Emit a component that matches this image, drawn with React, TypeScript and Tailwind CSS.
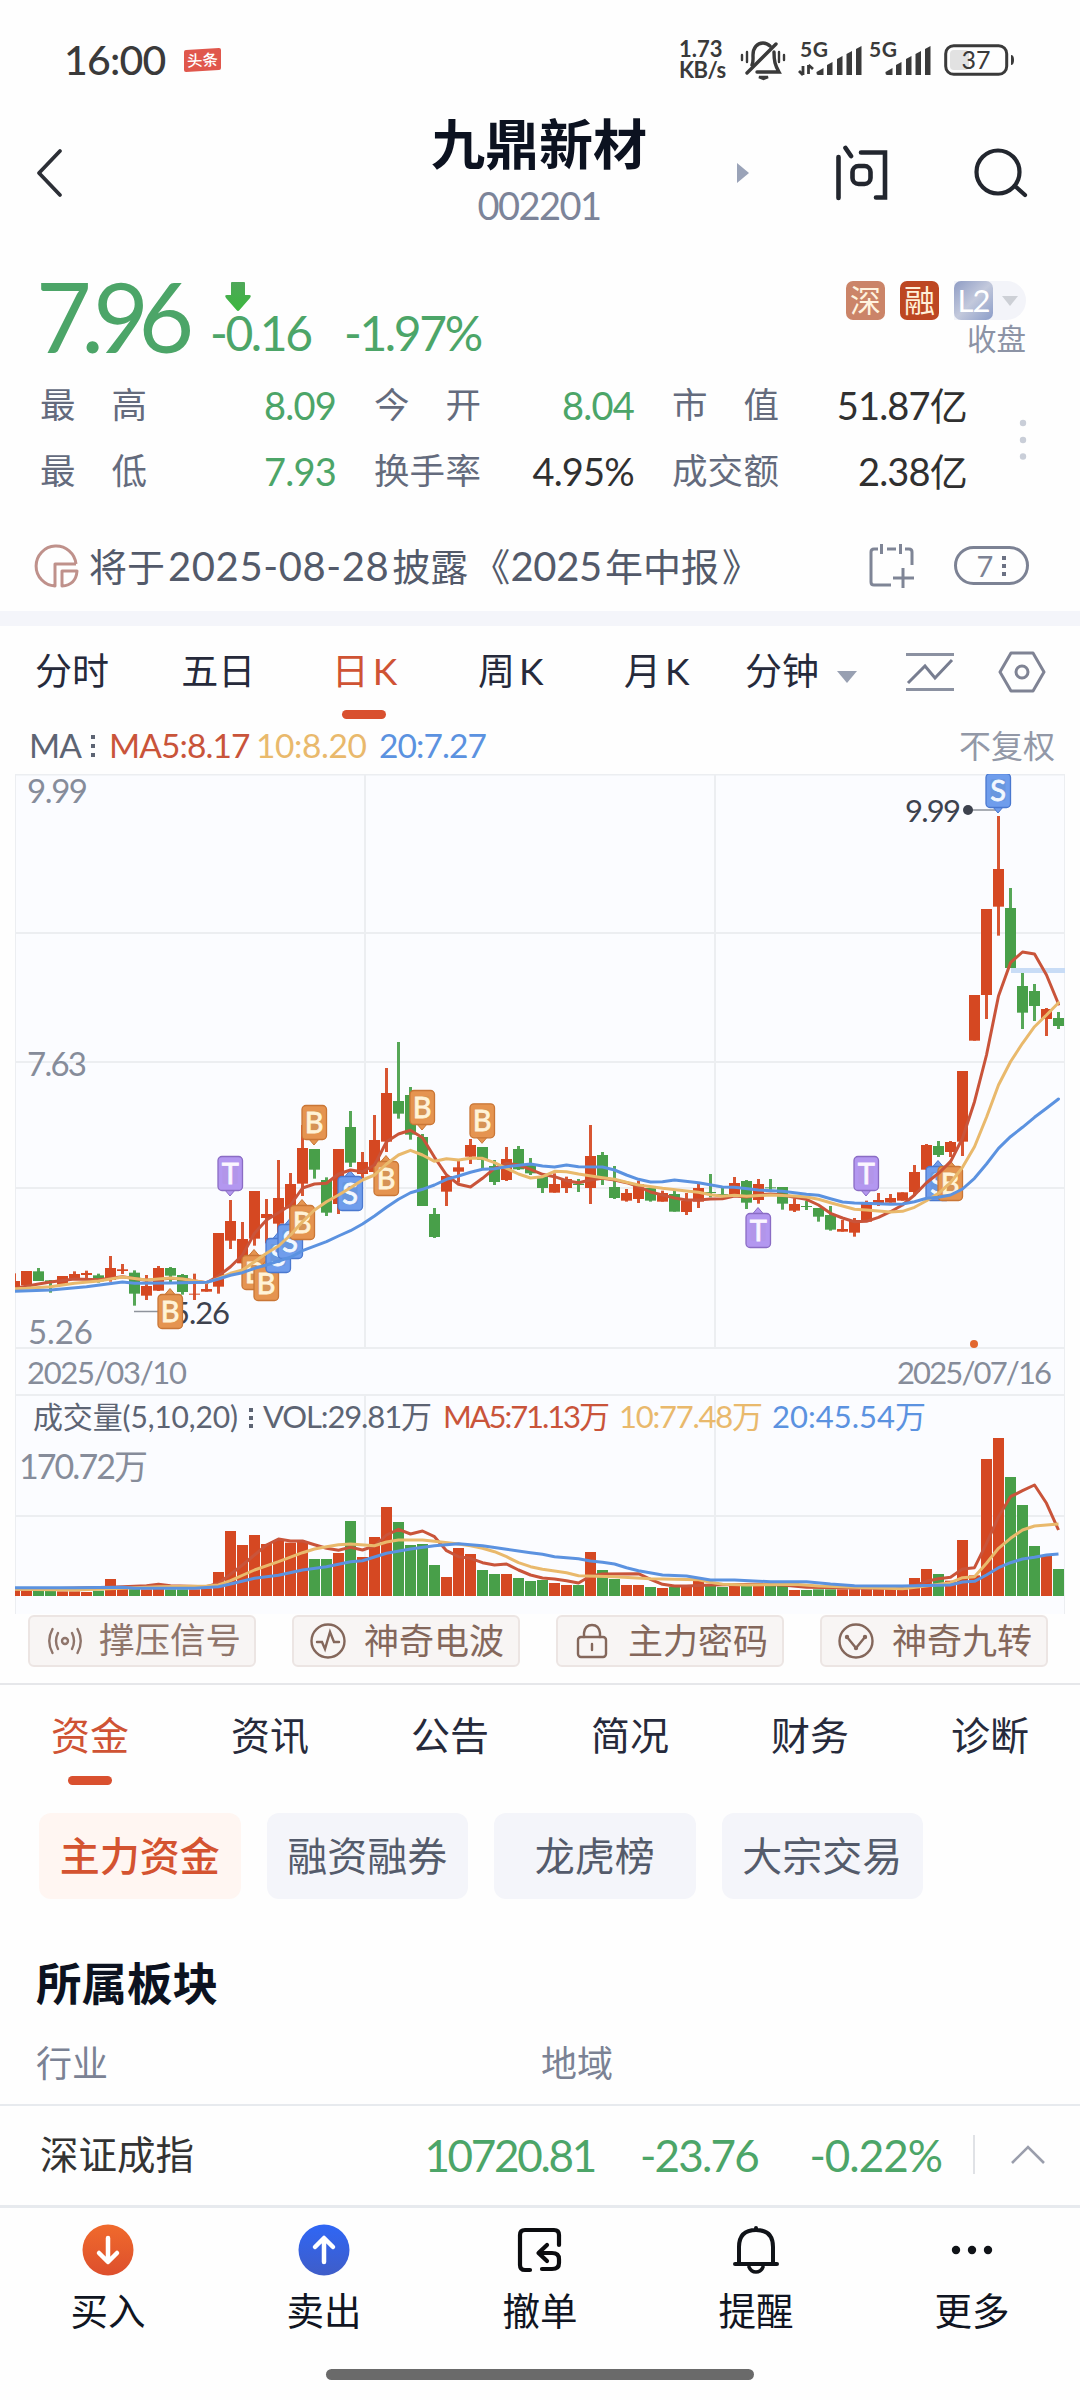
import React from 'react';
import clsx from 'clsx';

type Candle = [string, number, number, number, number, number];
type Point = [number, number];

const RED = '#d54822';
const GREEN = '#489f49';

// [color, body top, body bottom, wick top, wick bottom, volume top], in thirds of a pixel
const candles: Candle[] = [
  ['r', 963, 981, 940, 981, 752], ['r', 933, 976, 933, 976, 752], ['g', 934, 963, 924, 963, 752], ['g', 961, 966, 960, 998, 752],
  ['r', 948, 974, 948, 974, 754], ['r', 942, 956, 934, 958, 754], ['r', 939, 945, 932, 955, 756], ['g', 946, 964, 941, 968, 752],
  ['r', 924, 960, 888, 965, 717], ['r', 928, 933, 912, 942, 745], ['g', 938, 1001, 931, 1037, 735], ['r', 978, 1007, 945, 1020, 748],
  ['r', 924, 992, 918, 993, 742], ['g', 924, 947, 921, 970, 748], ['g', 945, 996, 942, 1004, 748], ['r', 1001, 1004, 941, 1020, 748],
  ['r', 987, 995, 970, 995, 745], ['r', 819, 980, 819, 1001, 696], ['r', 783, 842, 720, 867, 573], ['r', 837, 910, 786, 910, 615],
  ['r', 693, 836, 693, 857, 585], ['r', 762, 774, 717, 850, 612], ['r', 714, 791, 600, 830, 600], ['r', 672, 745, 639, 800, 608],
  ['r', 564, 671, 495, 708, 603], ['g', 567, 629, 567, 656, 657], ['g', 660, 758, 652, 768, 657], ['r', 567, 732, 567, 762, 639],
  ['g', 501, 608, 453, 621, 543], ['r', 606, 642, 576, 655, 651], ['r', 540, 636, 465, 636, 591], ['r', 399, 545, 324, 576, 501],
  ['g', 423, 461, 246, 476, 546], ['g', 405, 524, 381, 539, 615], ['g', 531, 738, 522, 738, 612], ['g', 762, 831, 744, 834, 675],
  ['r', 648, 695, 648, 738, 711], ['r', 622, 635, 603, 668, 624], ['r', 555, 590, 537, 612, 642], ['g', 561, 600, 561, 625, 690],
  ['g', 618, 666, 600, 675, 702], ['r', 597, 660, 561, 663, 702], ['g', 567, 628, 558, 630, 714], ['g', 612, 640, 594, 645, 723],
  ['g', 650, 684, 650, 699, 720], ['r', 672, 698, 640, 698, 729], ['r', 657, 684, 650, 699, 735], ['g', 671, 675, 657, 696, 735],
  ['r', 588, 684, 495, 732, 636], ['g', 585, 657, 576, 675, 690], ['g', 681, 714, 618, 717, 717], ['r', 699, 722, 687, 725, 735],
  ['r', 672, 717, 662, 729, 735], ['g', 684, 722, 684, 725, 741], ['r', 699, 725, 692, 725, 744], ['g', 702, 755, 690, 755, 741],
  ['r', 722, 756, 699, 765, 738], ['r', 684, 725, 672, 744, 722], ['g', 696, 699, 642, 712, 735], ['g', 702, 705, 682, 712, 741],
  ['r', 669, 708, 651, 708, 738], ['g', 663, 728, 660, 747, 738], ['r', 672, 720, 657, 731, 735], ['g', 682, 685, 657, 690, 738],
  ['g', 681, 731, 681, 749, 736], ['r', 732, 752, 715, 756, 750], ['g', 738, 741, 722, 750, 750], ['g', 744, 770, 744, 785, 748],
  ['g', 765, 809, 738, 812, 748], ['r', 807, 815, 780, 815, 748], ['r', 780, 818, 774, 830, 748], ['r', 732, 785, 722, 785, 748],
  ['r', 720, 730, 699, 738, 748], ['r', 714, 728, 702, 728, 748], ['r', 697, 722, 697, 722, 748], ['r', 636, 696, 615, 708, 714],
  ['r', 555, 629, 552, 629, 687], ['g', 558, 585, 543, 591, 702], ['r', 546, 576, 543, 591, 722], ['r', 333, 545, 333, 588, 600],
  ['r', 105, 242, 105, 242, 706], ['r', -153, 105, -153, 177, 357], ['r', -273, -160, -432, -73, 294], ['g', -156, 24, -216, 24, 411],
  ['g', 78, 158, 39, 207, 495], ['g', 93, 138, 72, 183, 618], ['r', 147, 177, 144, 228, 648], ['g', 174, 198, 156, 207, 687],
];

const ma5: Point[] = [[0, 985], [2, 972], [3, 966], [5, 957], [7, 959], [9, 950], [11, 961], [13, 955], [14, 957], [16, 968], [17, 948], [18, 920], [19, 885], [20, 820], [21, 780], [22, 758], [23, 735], [24, 684], [25, 672], [26, 670], [27, 642], [28, 630], [29, 635], [30, 615], [31, 545], [32, 522], [33, 511], [34, 533], [35, 592], [36, 645], [37, 673], [38, 681], [39, 655], [40, 625], [41, 610], [42, 615], [43, 628], [44, 643], [45, 650], [46, 662], [47, 668], [48, 660], [49, 655], [50, 660], [51, 668], [52, 680], [53, 696], [54, 705], [55, 714], [56, 720], [57, 720], [58, 717], [59, 716], [60, 708], [61, 711], [62, 704], [63, 702], [64, 705], [65, 712], [66, 718], [67, 735], [68, 760], [69, 774], [70, 785], [71, 784], [72, 772], [73, 755], [74, 735], [75, 705], [76, 668], [77, 640], [78, 605], [79, 535], [80, 425], [81, 285], [82, 108], [83, 8], [84, -24], [85, -18], [86, 45], [87, 132]];
const ma10: Point[] = [[0, 986], [1, 985], [3, 980], [5, 970], [7, 963], [9, 951], [11, 960], [13, 954], [14, 957], [16, 968], [17, 955], [18, 940], [19, 930], [20, 905], [21, 880], [22, 858], [23, 825], [24, 785], [25, 750], [26, 725], [27, 705], [28, 683], [29, 660], [30, 645], [31, 612], [32, 585], [33, 571], [34, 585], [35, 604], [36, 596], [37, 600], [38, 595], [39, 595], [40, 608], [41, 625], [42, 642], [43, 654], [44, 650], [45, 634], [46, 635], [47, 642], [49, 653], [50, 658], [51, 667], [52, 675], [54, 685], [56, 693], [57, 697], [58, 704], [59, 709], [60, 706], [61, 709], [63, 705], [65, 708], [66, 711], [67, 718], [68, 728], [69, 738], [70, 748], [71, 750], [73, 756], [74, 754], [75, 742], [76, 722], [77, 700], [78, 668], [79, 622], [80, 560], [81, 472], [82, 375], [83, 305], [84, 250], [85, 200], [86, 165], [87, 128]];
const ma20: Point[] = [[0, 994], [3, 990], [6, 980], [9, 966], [10, 970], [13, 969], [16, 967], [17, 957], [18, 946], [19, 938], [20, 925], [21, 915], [22, 903], [23, 892], [24, 872], [26, 845], [27, 828], [28, 812], [29, 792], [30, 768], [31, 742], [32, 718], [33, 698], [34, 688], [35, 675], [36, 658], [37, 648], [38, 637], [39, 628], [40, 626], [41, 620], [43, 612], [44, 618], [45, 621], [46, 615], [47, 620], [49, 621], [50, 630], [51, 645], [52, 658], [53, 666], [54, 665], [55, 660], [57, 668], [59, 681], [60, 682], [62, 690], [64, 694], [65, 698], [66, 703], [67, 706], [68, 716], [69, 726], [70, 729], [72, 731], [73, 733], [74, 732], [75, 725], [76, 715], [77, 712], [78, 705], [79, 687], [80, 655], [81, 612], [82, 565], [83, 530], [84, 502], [85, 472], [86, 445], [87, 417]];

const vol5: Point[] = [[0, 748], [2, 747], [8, 742], [11, 737], [12, 733], [13, 737], [16, 740], [17, 730], [18, 703], [19, 675], [20, 645], [21, 615], [22, 597], [23, 603], [24, 603], [25, 614], [26, 625], [27, 631], [28, 622], [29, 630], [30, 618], [31, 585], [32, 568], [33, 582], [34, 573], [35, 590], [36, 632], [37, 650], [38, 655], [39, 668], [40, 675], [41, 672], [42, 690], [43, 705], [44, 714], [45, 717], [46, 722], [47, 729], [48, 708], [49, 702], [52, 701], [53, 718], [54, 733], [55, 738], [56, 738], [58, 735], [62, 733], [64, 735], [66, 742], [70, 744], [74, 745], [75, 738], [76, 724], [77, 716], [78, 712], [79, 687], [80, 683], [81, 610], [82, 530], [83, 470], [84, 452], [85, 435], [86, 490], [87, 570]];
const vol10: Point[] = [[0, 748], [5, 750], [9, 745], [12, 740], [16, 738], [17, 735], [18, 722], [20, 690], [22, 665], [24, 638], [25, 627], [26, 620], [27, 614], [28, 612], [30, 617], [31, 606], [32, 600], [34, 600], [35, 604], [37, 612], [38, 617], [39, 625], [40, 635], [41, 650], [42, 668], [43, 680], [44, 688], [46, 698], [47, 707], [50, 710], [53, 716], [57, 719], [58, 727], [59, 733], [61, 735], [65, 733], [67, 738], [70, 742], [74, 746], [76, 738], [78, 728], [79, 713], [80, 710], [81, 670], [82, 625], [83, 595], [84, 570], [85, 558], [87, 552]];
const vol20: Point[] = [[0, 743], [5, 743], [9, 742], [10, 745], [15, 745], [17, 740], [18, 732], [20, 715], [22, 706], [24, 690], [26, 680], [28, 665], [29, 662], [31, 640], [33, 627], [35, 617], [37, 611], [39, 617], [41, 628], [43, 638], [44, 643], [45, 650], [47, 656], [48, 663], [49, 667], [50, 672], [51, 683], [52, 692], [54, 705], [56, 708], [58, 720], [60, 720], [63, 725], [66, 725], [68, 732], [70, 737], [74, 738], [78, 735], [79, 726], [80, 724], [81, 705], [82, 683], [83, 668], [84, 657], [85, 652], [86, 645], [87, 642]];

const marks: { i: number; y: number; kind: 'B' | 'S' | 'T'; up?: boolean }[] = [
  { i: 13, y: 1002, kind: 'B', up: true },
  { i: 18, y: 588, kind: 'T' },
  { i: 20, y: 885, kind: 'B', up: true },
  { i: 21, y: 918, kind: 'B', up: true },
  { i: 22, y: 834, kind: 'S', up: true },
  { i: 23, y: 792, kind: 'S', up: true },
  { i: 24, y: 735, kind: 'B', up: true },
  { i: 25, y: 435, kind: 'B' },
  { i: 28, y: 648, kind: 'S', up: true },
  { i: 31, y: 603, kind: 'B', up: true },
  { i: 34, y: 390, kind: 'B' },
  { i: 39, y: 430, kind: 'B' },
  { i: 62, y: 759, kind: 'T', up: true },
  { i: 71, y: 588, kind: 'T' },
  { i: 77, y: 618, kind: 'S', up: true },
  { i: 78, y: 618, kind: 'B', up: true },
  { i: 82, y: -561, kind: 'S' },
];

const markColors = {
  B: { fill: '#e59450', edge: '#c97636', inner: '#cb935a', text: '#fff3d8' },
  S: { fill: '#6f9dec', edge: '#4a78cf', inner: '#6593d6', text: '#f2f8ff' },
  T: { fill: '#b397f0', edge: '#8a6cc4', inner: '#b095e4', text: '#fbf6ff' },
};

// chart origin is (15, 774) on the page
const cx = (i: number) => 12 * i - 0.5;
const py = (v: number) => v / 3 + 186;
const vy = (v: number) => v / 3 - 55;

const toPath = (pts: Point[], y: (v: number) => number) =>
  pts.map(([i, v], n) => `${n ? 'L' : 'M'}${cx(i).toFixed(1)} ${y(v).toFixed(1)}`).join(' ');

function Mark({ i, y, kind, up }: { i: number; y: number; kind: 'B' | 'S' | 'T'; up?: boolean }) {
  const c = markColors[kind];
  return (
    <g transform={`translate(${cx(i) - 13} ${py(y)})`}>
      <path d={up ? 'M7 1 L12.5 -5.5 L18 1 Z' : 'M7 33.5 L12.5 40 L18 33.5 Z'} fill={c.fill} stroke={c.edge} strokeWidth="1" />
      <rect x="0.5" y="0.5" width="24.5" height="34" rx="4" fill={c.fill} stroke={c.edge} strokeWidth="1.3" />
      <rect x="5" y="6" width="15" height="22" rx="2" fill={c.inner} opacity="0.6" />
      <text x="12.7" y="28" textAnchor="middle" fontFamily="Lato, sans-serif" fontSize="29" fill={c.text}
        stroke={c.text} strokeWidth="0.8">{kind}</text>
    </g>
  );
}

function Label({ x, y, w, size, fill, children }: { x: number; y: number; w: number; size: number; fill: string; children: string }) {
  return (
    <text x={x} y={y} textLength={w} fontSize={size} fill={fill}
      fontFamily="Lato, 'Noto Sans CJK SC', sans-serif">{children}</text>
  );
}

function KLineChart() {
  return (
    <svg width="1050" height="840" viewBox="0 0 1050 840" className="block">
      <rect width="1050" height="840" fill="#fbfcff" />
      <g stroke="#eceef1" strokeWidth="2">
        {[0.5, 159, 288, 414, 574, 621, 742].map((y) => <path key={y} d={`M0 ${y}H1050`} />)}
        {[350, 700].map((x) => <path key={x} d={`M${x} 0V574M${x} 621V822`} />)}
        <path d="M0.5 0V840M1049.5 0V840" strokeWidth="1" />
      </g>

      <path d="M996 196.5H1050" stroke="#c8dcf6" strokeWidth="5" />

      {candles.map(([c, top, bottom, high, low], i) => {
        const color = c === 'r' ? RED : GREEN;
        return (
          <g key={i} fill={color}>
            <rect x={cx(i) - 1.5} y={py(high)} width="3" height={(low - high) / 3} opacity="0.92" />
            <rect x={cx(i) - 5.5} y={py(top)} width="11" height={(bottom - top) / 3} />
          </g>
        );
      })}

      <path d="M119 537.5H146M956 36H983" stroke="#8e939c" strokeWidth="1.6" />
      <circle cx="953" cy="36" r="5" fill="#3d424e" />
      <Label x={890} y={48} w={56} size={31} fill="#3d424e">9.99</Label>
      <Label x={157} y={550} w={58} size={31} fill="#3d424e">5.26</Label>

      {marks.map((m) => <Mark key={m.i} {...m} />)}

      <g fill="none" strokeWidth="3" strokeLinejoin="round" strokeLinecap="round">
        <path d={toPath(ma5, py)} stroke="#c9543a" />
        <path d={toPath(ma10, py)} stroke="#e9b96c" />
        <path d={toPath(ma20, py)} stroke="#5b92e0" />
      </g>
      <circle cx="959" cy="570" r="4" fill="#e2672f" />

      <Label x={12} y={29} w={61} size={33} fill="#868c9a">9.99</Label>
      <Label x={12} y={302} w={60} size={33} fill="#868c9a">7.63</Label>
      <Label x={13} y={570} w={65} size={33} fill="#868c9a">5.26</Label>
      <Label x={12} y={610} w={160} size={31} fill="#868c9a">2025/03/10</Label>
      <Label x={882} y={610} w={155} size={31} fill="#868c9a">2025/07/16</Label>

      {candles.map(([c, , , , , v], i) => (
        <rect key={i} x={cx(i) - 5.5} y={vy(v) + 621} width="11" height={(768 - v) / 3} fill={c === 'r' ? RED : GREEN} />
      ))}
      <g fill="none" strokeWidth="3" strokeLinejoin="round" transform="translate(0 621)">
        <path d={toPath(vol5, vy)} stroke="#c9543a" />
        <path d={toPath(vol10, vy)} stroke="#e9b96c" />
        <path d={toPath(vol20, vy)} stroke="#5b92e0" />
      </g>

      <Label x={18} y={654} w={205} size={30} fill="#5d6473">成交量(5,10,20)</Label>
      <g fill="#5d6473">
        <rect x="234" y="634" width="4" height="4" /><rect x="234" y="642" width="4" height="4" /><rect x="234" y="650" width="4" height="4" />
      </g>
      <Label x={248} y={654} w={169} size={31} fill="#5d6473">VOL:29.81万</Label>
      <Label x={428} y={654} w={167} size={31} fill="#c9543a">MA5:71.13万</Label>
      <Label x={604} y={654} w={144} size={31} fill="#e9b96c">10:77.48万</Label>
      <Label x={757} y={654} w={154} size={31} fill="#5b92e0">20:45.54万</Label>
      <Label x={4} y={705} w={129} size={34} fill="#868c9a">170.72万</Label>
    </svg>
  );
}

function SignalBars({ data }: { data?: boolean }) {
  return (
    <svg width="64" height="44" viewBox="0 0 64 44" fill="#3a3a3a" className="overflow-visible">
      <text x="0" y="19" fontFamily="Lato, sans-serif" fontWeight="700" fontSize="21" textLength="28">5G</text>
      {data && <path d="M3 37V28M-1 33L3 37M8.500 27V36M8.500 27L13 31" stroke="#3a3a3a" strokeWidth="2.800" fill="none" />}
      <path d="M16.500 34L23.500 30V37H18Q16.500 37 16.500 35Z" />
      <path d="M27 27L32.500 24V37H27Z" />
      <path d="M37 21L42.500 18V37H37Z" />
      <path d="M46.500 16L52 13V37H46.500Z" />
      <path d="M56 11L61.500 8V37H56Z" />
    </svg>
  );
}

function StatusBar() {
  return (
    <div className="h-[120px] flex items-center pl-[64px] pr-[64px] text-[#3a3a3a]">
      <span className="text-[41px] font-medium leading-none tracking-[-0.8px] -mt-[2px]">16:00</span>
      <svg width="37" height="26" viewBox="0 0 37 26" className="ml-[19px]">
        <path d="M2 3L35 1Q37 1 37 3V21Q37 23 35 23L2 25Q0 25 0 23V5Q0 3 2 3Z" fill="#e0574c" />
        <text x="3" y="19" fontFamily="'Noto Sans CJK SC', sans-serif" fontWeight="500" fontSize="15.5" fill="#fff" transform="rotate(-3 18 13)">头条</text>
      </svg>
      <div className="ml-auto flex items-center">
        <div className="flex flex-col text-[22px] font-bold leading-[21px] w-[52px] whitespace-nowrap -mt-[3px] -ml-[5px] mr-[2px]">
          <span>1.73</span>
          <span className="tracking-[-0.5px]">KB/s</span>
        </div>
        <svg width="46" height="42" viewBox="0 0 46 42" fill="none" stroke="#3a3a3a" strokeWidth="3.4" strokeLinecap="round" className="ml-[7px]">
          <path d="M12 26C13.500 23 13 20 13 16C13 9 17 4 23 4C26 4 28 5 30 7M34 13C34 22 35 26 39 33H17" />
          <path d="M36 5L7 34" />
          <path d="M19 38H28L23.5 40Z" fill="#3a3a3a" strokeWidth="2.5" />
          <path d="M7 13V23M2 16V21M39 13V23M44 16V21" strokeWidth="2.4" />
        </svg>
        <div className="flex gap-[5px] ml-[14px] -mt-[1px]">
          <SignalBars data />
          <SignalBars />
        </div>
        <svg width="72" height="32" viewBox="0 0 72 32" className="ml-[11px] -mt-[1px]">
          <rect x="6" y="6" width="19" height="20" rx="4" fill="#e2e2e2" />
          <rect x="1.7" y="1.7" width="61" height="28.6" rx="8" fill="none" stroke="#3a3a3a" strokeWidth="3" />
          <path d="M67 11Q70 11 70 16Q70 21 67 21Z" fill="#3a3a3a" />
          <text x="32" y="25" textAnchor="middle" fontFamily="Lato, sans-serif" fontSize="25" fill="#3a3a3a">37</text>
        </svg>
      </div>
    </div>
  );
}

function Header() {
  return (
    <div className="h-[140px] flex items-start">
      <div className="w-[431px] pl-[36px] pt-[28px]">
        <svg width="28" height="50" viewBox="0 0 28 50" fill="none" stroke="#2c2f36" strokeWidth="3.8" strokeLinecap="round" strokeLinejoin="round">
          <path d="M24 3L3 25L24 47" />
        </svg>
      </div>
      <div className="w-[216px] flex flex-col items-center">
        <h1 className="text-[54px] font-bold leading-[50px] text-[#0c1220] whitespace-nowrap">九鼎新材</h1>
        <span className="text-[38px] leading-[38px] mt-[16px] tracking-[-1.5px] text-[#7c8499]">002201</span>
      </div>
      <div className="flex-1 flex items-center h-[62px] mt-[22px]">
        <svg width="12" height="20" viewBox="0 0 12 20" className="ml-[90px]"><path d="M0 0L12 10L0 20Z" fill="#9aa3b8" /></svg>
        <svg width="52" height="56" viewBox="0 0 52 56" fill="none" stroke="#22262e" strokeWidth="4.6" strokeLinecap="round" className="ml-[87px]">
          <path d="M2.5 12V53" />
          <path d="M9.500 3L15 11" />
          <path d="M25 7.5H49V52.5H40" />
          <rect x="16.5" y="21" width="18" height="18" rx="6" />
        </svg>
        <svg width="56" height="52" viewBox="0 0 56 52" fill="none" stroke="#22262e" strokeWidth="4.2" strokeLinecap="round" className="ml-[85px]">
          <circle cx="25" cy="25" r="21.500" />
          <path d="M42 39L52 48" />
        </svg>
      </div>
    </div>
  );
}

function Quote() {
  const rows = [
    [['最', '高', '8.09', true], ['今', '开', '8.04', true], ['市', '值', '51.87亿', false]],
    [['最', '低', '7.93', true], ['换手', '率', '4.95%', false], ['成交', '额', '2.38亿', false]],
  ] as const;
  return (
    <div className="h-[264px]">
      <div className="flex h-[112px] pl-[36px] pr-[54px] text-[#4ca568]">
        <span className="text-[96px] leading-[112px] tracking-[-10.5px] w-[174px]">7.96</span>
        <div className="flex flex-col">
          <svg width="26" height="34" viewBox="0 0 26 34" className="ml-[15px] mt-[19px]">
            <defs>
              <linearGradient id="down" x1="0" y1="0" x2="0" y2="1">
                <stop offset="0" stopColor="#4fa75a" />
                <stop offset="1" stopColor="#3bb83d" />
              </linearGradient>
            </defs>
            <path d="M6 4Q6 3 7 3H19Q20 3 20 4V16H24Q27 16 25 19L14.500 31Q13 33 11.500 31L1 19Q-1 16 2 16H6Z" fill="url(#down)" />
          </svg>
          <div className="flex text-[48px] leading-[48px] tracking-[-2.4px] -mt-[4px]">
            <span className="w-[134px]">-0.16</span>
            <span>-1.97%</span>
          </div>
        </div>
        <div className="ml-auto pt-[21px] flex flex-col items-end">
          <div className="flex h-[39px] text-[31px] leading-[38px] text-center">
            <span className="w-[39px] rounded-[7px] bg-[#cb8468] text-[#fff3df]">深</span>
            <span className="w-[39px] ml-[15px] rounded-[7px] bg-[#bd4722] text-[#fff0d8]">融</span>
            <div className="ml-[15px] flex items-center rounded-r-full rounded-l-[7px] bg-[#f3f4f9] w-[72px]">
              <span className="w-[39px] h-[39px] rounded-[7px] bg-gradient-to-br from-[#8f9cc4] via-[#c3c9dc] to-[#8b9cc8] text-white text-[31px] tracking-[-1px]">L2</span>
              <svg width="16" height="10" viewBox="0 0 16 10" className="ml-[9px]"><path d="M0 0H16L8 10Z" fill="#cdd0d6" /></svg>
            </div>
          </div>
          <span className="text-[29.500px] leading-[34px] mt-[2px] text-[#8c93a5]">收盘</span>
        </div>
      </div>
      <div className="flex items-center pl-[40px]">
        <div className="w-[927px]">
          {rows.map((row, r) => (
            <div key={r} className="grid grid-cols-[296px_260px_295px] gap-x-[38px] h-[66px] items-center">
              {row.map(([a, b, value, down], c) => (
                <div key={c} className="flex items-center justify-between">
                  <span className="flex justify-between w-[107px] text-[35.500px] leading-none text-[#646b7d]">
                    <span>{a}</span><span>{b}</span>
                  </span>
                  <span className={clsx('text-[38px] leading-none tracking-[-0.8px]', down ? 'text-[#4ca568]' : 'text-[#303030]')}>{value}</span>
                </div>
              ))}
            </div>
          ))}
        </div>
        <svg width="8" height="42" viewBox="0 0 8 42" fill="#c9ced8" className="ml-[52px] mt-[3px]">
          <circle cx="4" cy="4" r="3.2" /><circle cx="4" cy="21" r="3.2" /><circle cx="4" cy="37.500" r="3.2" />
        </svg>
      </div>
    </div>
  );
}

function Notice() {
  return (
    <div className="h-[87px] flex items-center pl-[34px] pr-[51px] pb-[4px]">
      <svg width="46" height="46" viewBox="0 0 46 46" fill="none" stroke="#bf918b" strokeWidth="3" strokeLinejoin="round">
        <path d="M42 21A20 20 0 1 0 21 43V21H42" />
        <path d="M28 28H43Q42 42 28 43Z" />
      </svg>
      <span className="ml-[9px] text-[38px] leading-none text-[#535a6a] whitespace-nowrap">
        将于<span className="mx-[3px] text-[40px] tracking-[0.600px]">2025-08-28</span>披露<span className="ml-[4px]">《</span><span className="text-[40px] tracking-[-0.300px] mr-[3px]">2025</span>年中报<span className="ml-[3px]">》</span>
      </span>
      <svg width="46" height="48" viewBox="0 0 46 48" fill="none" stroke="#7f8596" strokeWidth="3" className="ml-auto">
        <path d="M22 43H5Q2 43 2 40V10Q2 7 5 7H9M18 7H27M36 7H40Q43 7 43 10V23" />
        <path d="M12.500 2V12M31.500 2V12M34 26V46M24 36H45" />
      </svg>
      <div className="ml-[39px] w-[75px] h-[39px] rounded-full border-3 border-[#7c8294] flex items-center justify-center gap-[9px] text-[#7c8294]">
        <span className="text-[29px] leading-none">7</span>
        <svg width="4" height="20" viewBox="0 0 4 20" fill="#6b7183"><rect width="4" height="4" /><rect y="8" width="4" height="4" /><rect y="16" width="4" height="4" /></svg>
      </div>
    </div>
  );
}

function PeriodTabs() {
  return (
    <div className="h-[95px] flex items-center text-[37px] leading-none text-[#262a3b]">
      {['分时', '五日', '日K', '周K', '月K'].map((tab) => (
        <div key={tab} className={clsx('relative w-[146.200px] h-full flex items-center justify-center gap-[4px] pb-[6px] pr-[2px]', tab === '日K' && 'text-[#cf5334]')}>
          {tab.endsWith('K') ? <><span>{tab[0]}</span><span>K</span></> : tab}
          {tab === '日K' && <i className="absolute left-[50px] bottom-[2px] w-[44px] h-[9px] rounded-full bg-[#d9502f]" />}
        </div>
      ))}
      <span className="ml-[14px] pb-[6px]">分钟</span>
      <svg width="20" height="12" viewBox="0 0 20 12" className="ml-[18px] mt-[6px]"><path d="M0 0H20L10 12Z" fill="#98a0b2" /></svg>
      <svg width="50" height="40" viewBox="0 0 50 40" fill="none" stroke="#777d90" strokeWidth="3" className="ml-[48px] -mt-[3px]">
        <path d="M1 2.500H49M1 37.500H49" stroke="#8b91a1" />
        <path d="M3 31L20 14L30 26L47 8" />
      </svg>
      <svg width="48" height="42" viewBox="0 0 48 42" fill="none" stroke="#7f8394" strokeWidth="3" strokeLinejoin="round" className="ml-[43px] -mt-[3px]">
        <path d="M13 2H35L46 21L35 40H13L2 21Z" />
        <circle cx="24" cy="21" r="6" />
      </svg>
    </div>
  );
}

function MaRow() {
  return (
    <div className="h-[53px] flex items-center pl-[29px] pr-[25px] pb-[3px] text-[33.500px] leading-none tracking-[-0.900px] text-[#5d6473]">
      <span className="w-[62px]">MA</span>
      <svg width="4" height="22" viewBox="0 0 4 22" fill="#5d6473"><rect width="4" height="4" /><rect y="9" width="4" height="4" /><rect y="18" width="4" height="4" /></svg>
      <span className="ml-[14px] w-[147px] text-[#c9543a]">MA5:8.17</span>
      <span className="w-[123px] tracking-[-0.400px] text-[#e9b96c]">10:8.20</span>
      <span className="text-[#5b92e0]">20:7.27</span>
      <span className="ml-auto text-[32px] tracking-normal text-[#9298a7]">不复权</span>
    </div>
  );
}

const chips = [
  { label: '撑压信号', icon: <><circle cx="18" cy="18" r="3" /><path d="M11 10Q7 18 11 26M25 10Q29 18 25 26M5.500 6Q-1 18 5.500 30M30.500 6Q37 18 30.500 30" /></> },
  { label: '神奇电波', icon: <><circle cx="18" cy="18" r="16.500" /><path d="M7 19H12L15 26L20 9L24 19H29" /></> },
  { label: '主力密码', icon: <><rect x="4" y="14" width="28" height="20" rx="3" /><path d="M10 14V10Q11 2 18 2Q25 2 26 10V14M18 21V27" /></> },
  { label: '神奇九转', icon: <><circle cx="18" cy="18" r="16.500" /><path d="M9 14L18 25L27 14" /><circle cx="9" cy="14" r="1" /><circle cx="18" cy="25" r="1" /><circle cx="27" cy="14" r="1" /></> },
];

function SignalChips() {
  return (
    <div className="h-[69px] flex gap-[36px] pl-[28px] pt-[1px]">
      {chips.map(({ label, icon }, i) => (
        <div key={label} className={clsx('w-[228px] h-[52px] flex items-center justify-between rounded-md border-2 bg-[#f8f5f4] border-[#ece5e3] leading-none', i ? 'text-[35px] text-[#84675b] px-[14px] pl-[16px]' : 'text-[35.500px] text-[#8f756b] pl-[17px] pr-[13px]')}>
          <svg width="36" height="36" viewBox="0 0 36 36" fill="none" stroke="currentColor" strokeWidth="2.400" strokeLinecap="round">{icon}</svg>
          <span className="pb-[2px]">{label}</span>
        </div>
      ))}
    </div>
  );
}

function InfoSection() {
  return (
    <div className="border-t-2 border-[#e6e7ea] h-[421px]">
      <div className="grid grid-cols-6 h-[101px] text-[39px] leading-none text-[#262a3b]">
        {['资金', '资讯', '公告', '简况', '财务', '诊断'].map((tab, i) => (
          <div key={tab} className={clsx('relative flex items-center justify-center pb-[1px]', !i && 'text-[#cf5334]')}>
            {tab}
            {!i && <i className="absolute bottom-[1px] w-[44px] h-[9px] rounded-full bg-[#d9502f]" />}
          </div>
        ))}
      </div>
      <div className="flex gap-[26px] pl-[39px] pt-[27px] text-[40px] leading-none text-[#545b6b]">
        {['主力资金', '融资融券', '龙虎榜', '大宗交易'].map((pill, i) => (
          <span key={pill} className={clsx('w-[201.500px] h-[86px] rounded-xl flex items-center justify-center pb-[1px]', i ? 'bg-[#f4f5fa]' : 'bg-[#fff6f2] text-[#d45330] font-medium')}>{pill}</span>
        ))}
      </div>
      <h2 className="pl-[36px] pt-[62px] text-[45.500px] leading-[46px] font-bold text-[#0c1220]">所属板块</h2>
      <div className="grid grid-cols-[505px_1fr] pl-[36px] pt-[38px] text-[36px] leading-[36px] text-[#7b8294]">
        <span>行业</span>
        <span>地域</span>
      </div>
    </div>
  );
}

function IndexBar() {
  return (
    <div className="h-[104px] border-t-2 border-b-3 border-[#e7eaee] flex items-center pb-[2px] text-[44px] leading-none tracking-[-2.300px] text-[#4ca568]">
      <span className="w-[389px] pl-[40px] text-[38.500px] tracking-normal text-[#333]">深证成指</span>
      <span className="w-[206px] text-right">10720.81</span>
      <span className="w-[163px] text-right tracking-[-1.800px]">-23.76</span>
      <span className="w-[184px] text-right tracking-[-1px]">-0.22%</span>
      <i className="ml-[31px] w-[2px] h-[39px] bg-[#e0e2e6]" />
      <svg width="34" height="20" viewBox="0 0 34 20" fill="none" stroke="#9a9eac" strokeWidth="2.600" className="ml-[36px]"><path d="M1 18L17 2L33 18" /></svg>
    </div>
  );
}

const actions = [
  { label: '买入', icon: <><circle cx="26" cy="26" r="25.500" fill="url(#buy)" /><path d="M26 14V37M17 29L26 38L35 29" stroke="#fff" strokeWidth="4.500" /></> },
  { label: '卖出', icon: <><circle cx="26" cy="26" r="25.500" fill="url(#sell)" /><path d="M26 38V15M17 23L26 14L35 23" stroke="#fff" strokeWidth="4.500" /></> },
  { label: '撤单', icon: <path d="M16 46H11Q6 46 6 41V11Q6 6 11 6H40Q45 6 45 11V21M28 45H38Q45 45 45 39V35Q45 29 38 29H26M33 21L24.500 29L33 37" stroke="#0b0c0f" strokeWidth="4.200" /> },
  { label: '提醒', icon: <><path d="M9 40V23Q9 6 26 6Q43 6 43 23V40M5 40H47M26 4V6" stroke="#101318" strokeWidth="4" /><path d="M19 43Q21 48 26 48Q31 48 33 43" stroke="#101318" strokeWidth="3.500" /></> },
  { label: '更多', icon: <g fill="#101318"><circle cx="10" cy="26" r="4.200" /><circle cx="26" cy="26" r="4.200" /><circle cx="42" cy="26" r="4.200" /></g> },
];

function ActionBar() {
  return (
    <div className="h-[192px] flex flex-col">
      <svg width="0" height="0" className="absolute">
        <defs>
          <linearGradient id="buy" x1="0" y1="0" x2="0" y2="1"><stop offset="0" stopColor="#f06a2c" /><stop offset="1" stopColor="#dd4f2d" /></linearGradient>
          <linearGradient id="sell" x1="0" y1="0" x2="0" y2="1"><stop offset="0" stopColor="#2f66f5" /><stop offset="1" stopColor="#3f5dc8" /></linearGradient>
        </defs>
      </svg>
      <div className="grid grid-cols-5 pt-[16px]">
        {actions.map(({ label, icon }) => (
          <div key={label} className="flex flex-col items-center">
            <svg width="52" height="52" viewBox="0 0 52 52" fill="none" strokeLinecap="round" strokeLinejoin="round">{icon}</svg>
            <span className="text-[37.500px] leading-[40px] mt-[15px] text-[#101522]">{label}</span>
          </div>
        ))}
      </div>
      <div className="mx-auto mt-auto mb-[20px] w-[428px] h-[11px] rounded-full bg-[#6a6a6a]" />
    </div>
  );
}

export default function App() {
  return (
    <div className="w-[1080px] h-[2400px] flex flex-col bg-[#fefefe] overflow-hidden font-[Lato,'Noto_Sans_CJK_SC',sans-serif]">
      <StatusBar />
      <Header />
      <Quote />
      <Notice />
      <div className="h-[15px] bg-[#f4f5fa]" />
      <PeriodTabs />
      <MaRow />
      <div className="pl-[15px]">
        <KLineChart />
      </div>
      <SignalChips />
      <InfoSection />
      <IndexBar />
      <ActionBar />
    </div>
  );
}
